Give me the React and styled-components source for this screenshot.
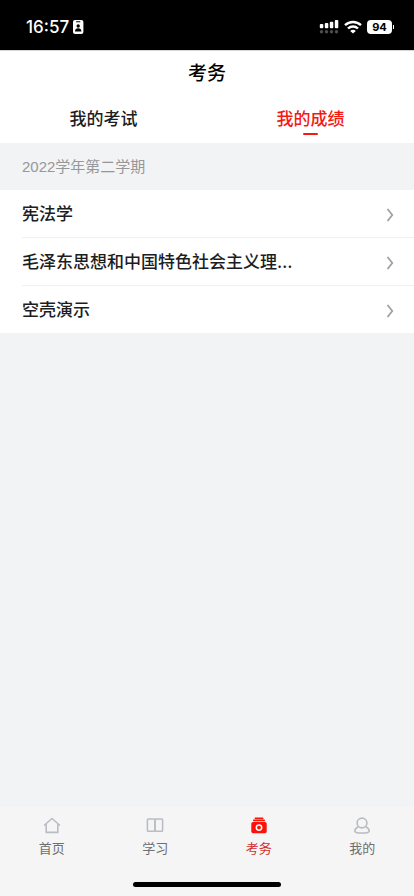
import React, { useState } from "react";
import styled, { createGlobalStyle } from "styled-components";

const courses = ["宪法学", "毛泽东思想和中国特色社会主义理…", "空壳演示"];

const HomeIcon = () => (
  <svg width="18" height="18" viewBox="0 0 18 18" fill="none" stroke="#b9bcc2" strokeWidth="1.6" strokeLinecap="round" strokeLinejoin="round">
    <path d="M1.500 8 9 1.500 16.500 8M3.200 7v8.400h11.600V7" />
  </svg>
);

const BookIcon = () => (
  <svg width="18" height="18" viewBox="0 0 18 18" fill="none" stroke="#b9bcc2" strokeWidth="1.5">
    <rect x="1.4" y="2" width="7.500" height="12.300" rx="0.8" />
    <rect x="9.1" y="2" width="7.500" height="12.300" rx="0.8" />
  </svg>
);

const ExamIcon = () => (
  <svg width="18" height="18" viewBox="0 0 18 18">
    <g fill="#fb1208">
      <rect x="4.6" y="0.6" width="8.8" height="1.400" rx="0.6" />
      <rect x="3" y="2.600" width="12" height="1.700" rx="0.7" />
      <rect x="1.3" y="4.900" width="15.4" height="11.4" rx="1.8" />
    </g>
    <circle cx="9" cy="10.600" r="2.700" fill="none" stroke="#fff" strokeWidth="1.5" />
  </svg>
);

const UserIcon = () => (
  <svg width="18" height="18" viewBox="0 0 18 18" fill="none" stroke="#b9bcc2" strokeWidth="1.6" strokeLinejoin="round">
    <circle cx="9" cy="6" r="4.900" />
    <path d="M5.200 10C3 10.800 1.800 12.300 1.800 13.900c0 1.300 2.700 2.100 7.200 2.100s7.200-.8 7.200-2.100c0-1.600-1.200-3.100-3.400-3.900" />
  </svg>
);

const navItems = [
  { label: "首页", icon: <HomeIcon /> },
  { label: "学习", icon: <BookIcon /> },
  { label: "考务", icon: <ExamIcon />, active: true },
  { label: "我的", icon: <UserIcon /> },
];

const StatusIcons = () => (
  <StatusGroup>
    <svg width="20" height="16" viewBox="0 0 20 16">
      <g fill="#fff">
        <rect x="0.8" y="5" width="3.500" height="4.200" rx="1" />
        <rect x="5.8" y="4" width="3.500" height="5.200" rx="1" />
        <rect x="10.8" y="2.700" width="3.500" height="6.500" rx="1" />
        <rect x="15.8" y="1" width="3.500" height="8.200" rx="1" />
      </g>
      <g fill="#4d4d4d">
        <circle cx="2.5" cy="12.700" r="1.700" />
        <circle cx="7.5" cy="12.700" r="1.700" />
        <circle cx="12.5" cy="12.700" r="1.700" />
        <circle cx="17.5" cy="12.700" r="1.700" />
      </g>
    </svg>
    <svg width="18" height="14" viewBox="0 0 18 14" fill="none" stroke="#fff" strokeWidth="2.400">
      <path d="M1 5.200a11.500 11.500 0 0 1 16 0" />
      <path d="M4 8.500a7.200 7.200 0 0 1 10 0" />
      <path d="M9 13.500 6.200 10.900a3.900 3.900 0 0 1 5.600 0z" fill="#fff" stroke="none" />
    </svg>
    <Battery>
      <BatteryLevel>94</BatteryLevel>
      <BatteryTip />
    </Battery>
  </StatusGroup>
);

const App = () => {
  const [tab, setTab] = useState("我的成绩");

  return (
    <React.Fragment>
      <GlobalStyle />
      <Page>
        <StatusBar>
          <StatusClock>
            16:57
            <svg width="12" height="16" viewBox="0 0 12 16">
              <rect x="1" y="1" width="10.400" height="14" rx="2" fill="#fff" />
              <rect x="4" y="2.300" width="4.400" height="1" rx="0.5" fill="#000" />
              <circle cx="6.200" cy="7" r="1.700" fill="#000" />
              <path d="M3 12.500c0-2 1.300-3.200 3.200-3.200s3.200 1.200 3.200 3.200z" fill="#000" />
            </svg>
          </StatusClock>
          <StatusIcons />
        </StatusBar>
        <Header>
          <Title>考务</Title>
          <Tabs>
            {["我的考试", "我的成绩"].map((name) => (
              <Tab key={name} $active={tab === name} onClick={() => setTab(name)}>
                {name}
              </Tab>
            ))}
          </Tabs>
        </Header>
        <Main>
          <Term>2022学年第二学期</Term>
          <List>
            {courses.map((name) => (
              <Item key={name}>
                <ItemButton>
                  <ItemName>{name}</ItemName>
                  <Chevron viewBox="0 0 8 14">
                    <path d="m1.500 1 4.800 6-4.800 6" />
                  </Chevron>
                </ItemButton>
              </Item>
            ))}
          </List>
        </Main>
        <Footer>
          <Nav>
            {navItems.map((item) => (
              <NavLink key={item.label} href="#" $active={item.active}>
                {item.icon}
                {item.label}
              </NavLink>
            ))}
          </Nav>
          <HomeIndicator />
        </Footer>
      </Page>
    </React.Fragment>
  );
};

export default App;

const GlobalStyle = createGlobalStyle`
  * {
    box-sizing: border-box;
  }
  body {
    margin: 0;
    font-family: "Liberation Sans", "Noto Sans CJK SC", sans-serif;
  }
  button {
    border: 0;
    padding: 0;
    background: none;
    font-family: inherit;
    cursor: pointer;
  }
`;

const Page = styled.div`
  display: flex;
  flex-direction: column;
  min-height: 100vh;
  background: #f1f3f5;
`;

const StatusBar = styled.div`
  display: flex;
  align-items: center;
  justify-content: space-between;
  height: 50px;
  padding: 4px 20px 0 26px;
  background: #000;
  color: #fff;
  font-family: Inter, sans-serif;
`;

const StatusClock = styled.div`
  display: flex;
  align-items: center;
  gap: 3px;
  font-size: 17px;
  font-weight: 500;
`;

const StatusGroup = styled.div`
  display: flex;
  align-items: center;
  gap: 5px;
`;

const Battery = styled.div`
  display: flex;
  align-items: center;
  gap: 1px;
`;

const BatteryLevel = styled.span`
  width: 25px;
  border-radius: 4px;
  background: #fff;
  color: #000;
  font-size: 11px;
  font-weight: 700;
  line-height: 14px;
  text-align: center;
`;

const BatteryTip = styled.span`
  width: 1px;
  height: 4px;
  background: #fff;
`;

const Header = styled.header`
  background: #fff;
  border-top: 1px solid #d6d6d6;
`;

const Title = styled.h1`
  margin: 0;
  color: #000;
  font-size: 19px;
  font-weight: 500;
  line-height: 46px;
  text-align: center;
`;

const Tabs = styled.div`
  display: flex;
`;

const Tab = styled.button`
  display: flex;
  flex: 1;
  flex-direction: column;
  align-items: center;
  height: 46px;
  padding-top: 10px;
  color: ${(props) => (props.$active ? "#f5190f" : "#1c1d1f")};
  font-size: 17px;
  font-weight: 500;
  line-height: 26px;
  &::after {
    content: "";
    width: 15px;
    height: 2px;
    border-radius: 1px;
    background: ${(props) => (props.$active ? "#f5190f" : "transparent")};
  }
`;

const Main = styled.main`
  flex: 1;
`;

const Term = styled.h2`
  margin: 0;
  padding: 0 22px;
  color: #96979a;
  font-size: 15px;
  font-weight: 400;
  line-height: 47px;
`;

const List = styled.ul`
  margin: 0;
  padding: 0 0 0 22px;
  background: #fff;
  list-style: none;
`;

const Item = styled.li`
  border-bottom: 1px solid #f0f1f3;
  &:last-child {
    border-bottom: 0;
  }
`;

const ItemButton = styled.button`
  display: flex;
  align-items: center;
  justify-content: space-between;
  width: 100%;
  height: 47px;
  padding-right: 20px;
  text-align: left;
`;

const ItemName = styled.span`
  width: 75%;
  overflow: hidden;
  color: #1c1d1f;
  font-family: Inter, "Noto Sans CJK SC", sans-serif;
  font-size: 17px;
  font-weight: 500;
  line-height: 28px;
  text-overflow: ellipsis;
  white-space: nowrap;
`;

const Chevron = styled.svg`
  width: 8px;
  height: 14px;
  margin-top: 3px;
  fill: none;
  stroke: #a0a1a3;
  stroke-width: 1.8;
`;

const Footer = styled.footer`
  background: #f5f5f5;
`;

const Nav = styled.nav`
  display: flex;
  padding: 10px 0 23px;
`;

const NavLink = styled.a`
  display: flex;
  flex: 1;
  flex-direction: column;
  align-items: center;
  gap: 4px;
  color: ${(props) => (props.$active ? "#d0302c" : "#6e6e6e")};
  font-size: 13px;
  line-height: 20px;
  text-decoration: none;
`;

const HomeIndicator = styled.div`
  width: 148px;
  height: 5px;
  margin: 0 auto 9px;
  border-radius: 3px;
  background: #000;
`;
